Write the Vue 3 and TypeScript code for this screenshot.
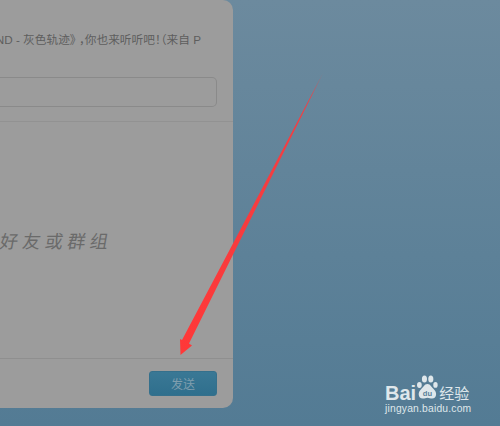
<script setup lang="ts">
const shareText = 'BEYOND - 灰色轨迹》 ，你也来听听吧！（来自 P'
</script>

<template>
  <div class="page">
    <section class="panel">
      <div class="top">
        <p class="share">{{ shareText }}</p>
        <div class="input"></div>
      </div>
      <div class="middle">
        <span class="hint">好友或群组</span>
      </div>
      <div class="footer">
        <button class="send">发送</button>
      </div>
    </section>

    <svg class="arrow" width="500" height="426" viewBox="0 0 500 426">
      <defs>
        <linearGradient id="fade" x1="323" y1="73" x2="180" y2="355" gradientUnits="userSpaceOnUse">
          <stop offset="0" stop-color="#ff3b3b" stop-opacity="0.4" />
          <stop offset="0.08" stop-color="#f03f44" />
          <stop offset="1" stop-color="#ff3838" />
        </linearGradient>
      </defs>
      <path d="M323 73 L189 343.500 L192 345.500 L180.500 355 L180 339 L182 340 Z" fill="url(#fade)" />
    </svg>

    <div class="mark">
      <div class="mark-row">
        <span class="bai">Bai</span>
        <svg class="paw" width="22" height="29" viewBox="0 0 26 30">
          <ellipse cx="4" cy="12" rx="2.800" ry="3.600" fill="#dfe7eb" />
          <ellipse cx="10" cy="5" rx="3" ry="4.200" fill="#dfe7eb" />
          <ellipse cx="17.500" cy="5" rx="3" ry="4.200" fill="#dfe7eb" />
          <ellipse cx="23" cy="12" rx="2.600" ry="3.400" fill="#dfe7eb" />
          <path d="M13.500 11 C9.500 11 9 15 6 17 C2 20 2 28 8 28 C10.500 28 11.500 27 13.500 27 C15.500 27 17 28 19 28 C25 28 25 20 21 17 C18 15 17.500 11 13.500 11 Z" fill="#dfe7eb" />
          <text x="13.500" y="25" text-anchor="middle" class="du">du</text>
        </svg>
        <span class="jy">经验</span>
      </div>
      <div class="url">jingyan.baidu.com</div>
    </div>
  </div>
</template>

<style>
html,
body {
  margin: 0;
  overflow: hidden;
}
</style>

<style scoped>
.page {
  position: relative;
  width: 500px;
  height: 426px;
  overflow: hidden;
  background: linear-gradient(180deg, #6c8a9e 0%, #537b94 100%);
  font-family: "Liberation Sans", "Noto Sans CJK SC", sans-serif;
}

.panel {
  width: 233px;
  height: 408px;
  display: flex;
  flex-direction: column;
  box-sizing: border-box;
  background: #9c9c9c;
  border-bottom-right-radius: 10px;
  border-top-right-radius: 10px;
  overflow: hidden;
}

.top {
  height: 122px;
  box-sizing: border-box;
  border-bottom: 1px solid #929292;
  padding-top: 32px;
}

.share {
  margin: 0 32px 0 0;
  font-size: 11.700px;
  line-height: 15px;
  color: #5e5e5e;
  white-space: nowrap;
  display: flex;
  justify-content: flex-end;
  font-feature-settings: "halt";
}

.input {
  margin: 30px 16px 0 0;
  height: 30px;
  box-sizing: border-box;
  border: 1px solid #8a8a8a;
  border-left: none;
  border-radius: 0 5px 5px 0;
}

.middle {
  flex: 1;
  padding-top: 108px;
  box-sizing: border-box;
}

.hint {
  display: block;
  font-size: 18px;
  line-height: 24px;
  letter-spacing: 4.500px;
  color: #6a6a6a;
  transform: skewX(-10deg);
  white-space: nowrap;
}

.footer {
  height: 50px;
  box-sizing: border-box;
  border-top: 1px solid #8f8f8f;
  padding: 12px 16px 0 0;
  display: flex;
  justify-content: flex-end;
  align-items: flex-start;
}

.send {
  width: 68px;
  height: 25px;
  padding: 0;
  border: 1px solid #35708c;
  border-radius: 3px;
  background: linear-gradient(180deg, #3a7895 0%, #2f6f8d 100%);
  color: #7f9eae;
  font-family: inherit;
  font-size: 12px;
}

.arrow {
  position: absolute;
  left: 0;
  top: 0;
}

.mark {
  position: absolute;
  left: 385px;
  top: 372px;
  color: #dfe7eb;
}

.mark-row {
  display: flex;
  align-items: flex-end;
  height: 31px;
}

.bai {
  font-size: 20px;
  font-weight: 700;
  line-height: 20px;
}

.paw {
  margin: 0 0 1px 0;
}

.du {
  font-size: 9px;
  font-weight: 700;
  fill: #5a7f97;
  font-family: "Liberation Sans", sans-serif;
}

.jy {
  font-size: 15px;
  line-height: 19px;
  margin-left: 1px;
}

.url {
  font-size: 10.300px;
  line-height: 12px;
  letter-spacing: 0.200px;
  white-space: nowrap;
}
</style>
